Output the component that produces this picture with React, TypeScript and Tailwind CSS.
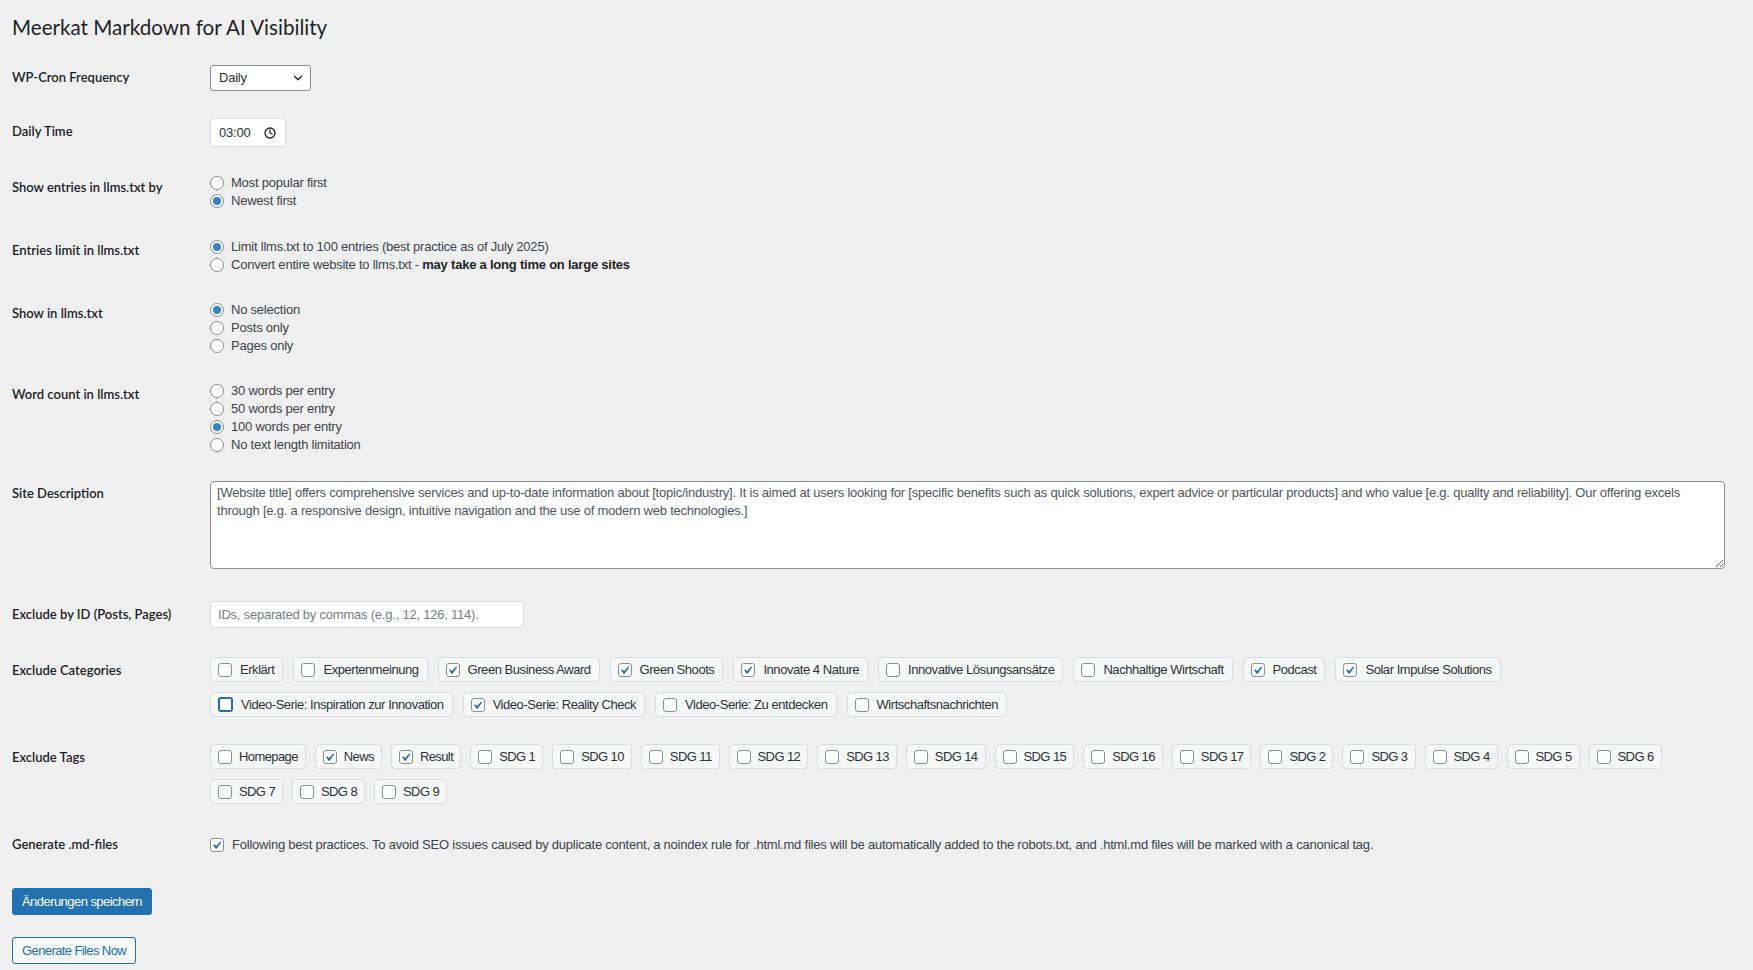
import React from "react";
import { ChevronDown, Clock } from "lucide-react";

// Zeilen der Kategorien / Tags, wie im Screenshot umgebrochen
const categoryRows: { label: string; checked?: boolean; focus?: boolean }[][] = [
  [
    { label: "Erklärt" },
    { label: "Expertenmeinung" },
    { label: "Green Business Award", checked: true },
    { label: "Green Shoots", checked: true },
    { label: "Innovate 4 Nature", checked: true },
    { label: "Innovative Lösungsansätze" },
    { label: "Nachhaltige Wirtschaft" },
    { label: "Podcast", checked: true },
    { label: "Solar Impulse Solutions", checked: true },
  ],
  [
    { label: "Video-Serie: Inspiration zur Innovation", focus: true },
    { label: "Video-Serie: Reality Check", checked: true },
    { label: "Video-Serie: Zu entdecken" },
    { label: "Wirtschaftsnachrichten" },
  ],
];

const tagRows: { label: string; checked?: boolean }[][] = [
  [
    { label: "Homepage" },
    { label: "News", checked: true },
    { label: "Result", checked: true },
    { label: "SDG 1" },
    { label: "SDG 10" },
    { label: "SDG 11" },
    { label: "SDG 12" },
    { label: "SDG 13" },
    { label: "SDG 14" },
    { label: "SDG 15" },
    { label: "SDG 16" },
    { label: "SDG 17" },
    { label: "SDG 2" },
    { label: "SDG 3" },
    { label: "SDG 4" },
    { label: "SDG 5" },
    { label: "SDG 6" },
  ],
  [{ label: "SDG 7" }, { label: "SDG 8" }, { label: "SDG 9" }],
];

const siteDescription =
  "[Website title] offers comprehensive services and up-to-date information about [topic/industry]. It is aimed at users looking for [specific benefits such as quick solutions, expert advice or particular products] and who value [e.g. quality and reliability]. Our offering excels through [e.g. a responsive design, intuitive navigation and the use of modern web technologies.]";

function Checkbox({ checked, focus }: { checked?: boolean; focus?: boolean }) {
  return (
    <span
      className={
        focus
          ? "flex h-[15px] w-[15px] shrink-0 items-center justify-center rounded-[3px] border-2 border-[#2271b1] bg-white"
          : "flex h-[14px] w-[14px] shrink-0 items-center justify-center rounded-[3px] border border-[#8c8f94] bg-white"
      }
    >
      {checked && (
        <svg viewBox="3 2.5 15.5 14" className="h-[12px] w-[12px]">
          <path d="M14.83 4.89l1.34.94-5.81 8.38H9.02L5.78 9.67l1.34-1.25 2.57 2.4z" fill="#2271b1" />
        </svg>
      )}
    </span>
  );
}

function Radio({ checked, label }: { checked?: boolean; label: React.ReactNode }) {
  return (
    <label className="flex h-[18px] items-center gap-[7px]">
      <span className="flex h-[14px] w-[14px] shrink-0 items-center justify-center rounded-full border border-[#8c8f94] bg-white">
        {checked && <span className="h-[8px] w-[8px] rounded-full bg-[#3582c4]" />}
      </span>
      <span>{label}</span>
    </label>
  );
}

function Chip({
  label,
  checked,
  focus,
  compact,
}: {
  label: string;
  checked?: boolean;
  focus?: boolean;
  compact?: boolean;
}) {
  return (
    <label
      className={
        compact
          ? "flex h-[25px] items-center gap-[7px] rounded-[4px] border border-[#dcdcde] bg-[#f6f7f7] pl-[7px] pr-[7px] tracking-[-0.6px] text-[#2c3338]"
          : "flex h-[25px] items-center gap-[8px] rounded-[4px] border border-[#dcdcde] bg-[#f6f7f7] pl-[7px] pr-[8px] tracking-[-0.45px] text-[#2c3338]"
      }
    >
      <Checkbox checked={checked} focus={focus} />
      <span className="whitespace-nowrap">{label}</span>
    </label>
  );
}

function Row({
  label,
  className,
  labelClass,
  fieldClass,
  children,
}: {
  label: string;
  className: string;
  labelClass: string;
  fieldClass: string;
  children: React.ReactNode;
}) {
  return (
    <div className={`flex ${className}`}>
      <div
        className={`w-[198px] shrink-0 font-['Lato',sans-serif] text-[13px] font-semibold leading-[18px] tracking-normal text-[#1d2327] ${labelClass}`}
      >
        {label}
      </div>
      <div className={`min-w-0 flex-1 ${fieldClass}`}>{children}</div>
    </div>
  );
}

export default function App() {
  return (
    <div className="min-h-screen bg-[#f0f0f1] pl-[12px] pr-[28px] font-['Liberation_Sans',Arial,sans-serif] text-[13px] tracking-[-0.22px] text-[#3c434a]">
      <h1 className="h-[50px] pt-[12px] font-['Lato',sans-serif] text-[20.6px] font-normal leading-[30px] tracking-normal text-[#1d2327]">
        Meerkat Markdown for AI Visibility
      </h1>

      <Row label="WP-Cron Frequency" className="h-[53px]" labelClass="pt-[18px]" fieldClass="pt-[15px]">
        <div className="flex h-[26px] w-[101px] items-center justify-between rounded-[3px] border border-[#8c8f94] bg-white pl-[8px] pr-[5px] text-[#2c3338]">
          <span>Daily</span>
          <ChevronDown size={14} strokeWidth={2.2} className="text-[#1d2327]" />
        </div>
      </Row>

      <Row label="Daily Time" className="h-[56px]" labelClass="pt-[19px]" fieldClass="pt-[15px]">
        <div className="flex h-[29px] w-[76px] items-center justify-between rounded-[3px] border border-[#dcdcde] bg-white pl-[8px] pr-[9px] text-[#2c3338]">
          <span>03:00</span>
          <Clock size={12} strokeWidth={2.6} className="text-[#1d2327]" />
        </div>
      </Row>

      <Row label="Show entries in llms.txt by" className="h-[64px]" labelClass="pt-[19px]" fieldClass="pt-[15px]">
        <Radio label="Most popular first" />
        <Radio label="Newest first" checked />
      </Row>

      <Row label="Entries limit in llms.txt" className="h-[63px]" labelClass="pt-[18px]" fieldClass="pt-[15px]">
        <Radio label="Limit llms.txt to 100 entries (best practice as of July 2025)" checked />
        <Radio
          label={
            <>
              Convert entire website to llms.txt - <strong className="font-bold text-[#1d2327]">may take a long time on large sites</strong>
            </>
          }
        />
      </Row>

      <Row label="Show in llms.txt" className="h-[81px]" labelClass="pt-[18px]" fieldClass="pt-[15px]">
        <Radio label="No selection" checked />
        <Radio label="Posts only" />
        <Radio label="Pages only" />
      </Row>

      <Row label="Word count in llms.txt" className="h-[99px]" labelClass="pt-[18px]" fieldClass="pt-[15px]">
        <Radio label="30 words per entry" />
        <Radio label="50 words per entry" />
        <Radio label="100 words per entry" checked />
        <Radio label="No text length limitation" />
      </Row>

      <Row label="Site Description" className="h-[120px]" labelClass="pt-[18px]" fieldClass="pt-[15px]">
        <textarea
          readOnly
          defaultValue={siteDescription}
          className="block h-[88px] w-full resize-y rounded-[4px] border border-[#8c8f94] bg-white px-[6px] py-[2px] text-[13px] leading-[18px] tracking-[-0.22px] text-[#50575e] outline-none"
        />
      </Row>

      <Row label="Exclude by ID (Posts, Pages)" className="h-[56px]" labelClass="pt-[19px]" fieldClass="pt-[15px]">
        <input
          type="text"
          placeholder="IDs, separated by commas (e.g., 12, 126, 114)."
          className="block h-[27px] w-[314px] rounded-[3px] border border-[#dcdcde] bg-white px-[7px] text-[13px] tracking-[-0.22px] text-[#2c3338] outline-none placeholder:text-[#787c82]"
        />
      </Row>

      <Row label="Exclude Categories" className="h-[88px]" labelClass="pt-[19px]" fieldClass="pt-[15px]">
        <div className="flex flex-col gap-[10px]">
          {categoryRows.map((row, i) => (
            <div key={i} className="flex gap-[10px]">
              {row.map((c) => (
                <Chip key={c.label} label={c.label} checked={c.checked} focus={c.focus} />
              ))}
            </div>
          ))}
        </div>
      </Row>

      <Row label="Exclude Tags" className="h-[91px]" labelClass="pt-[18px]" fieldClass="pt-[14px]">
        <div className="flex flex-col gap-[10px]">
          {tagRows.map((row, i) => (
            <div key={i} className="flex gap-[9px]">
              {row.map((t) => (
                <Chip key={t.label} label={t.label} checked={t.checked} compact />
              ))}
            </div>
          ))}
        </div>
      </Row>

      <Row label="Generate .md-files" className="h-[67px]" labelClass="pt-[14px]" fieldClass="pt-[15px]">
        <label className="flex h-[18px] items-center gap-[8px]">
          <Checkbox checked />
          <span>
            Following best practices. To avoid SEO issues caused by duplicate content, a noindex rule for .html.md files will be
            automatically added to the robots.txt, and .html.md files will be marked with a canonical tag.
          </span>
        </label>
      </Row>

      <div className="flex flex-col items-start gap-[22px] pb-[6px]">
        <button className="h-[27px] rounded-[3px] border border-[#2271b1] bg-[#2271b1] px-[9px] text-[13px] tracking-[-0.55px] text-white">
          Änderungen speichern
        </button>
        <button className="h-[27px] rounded-[3px] border border-[#2271b1] bg-[#f6f7f7] px-[9px] text-[13px] tracking-[-0.6px] text-[#2271b1]">
          Generate Files Now
        </button>
      </div>
    </div>
  );
}
